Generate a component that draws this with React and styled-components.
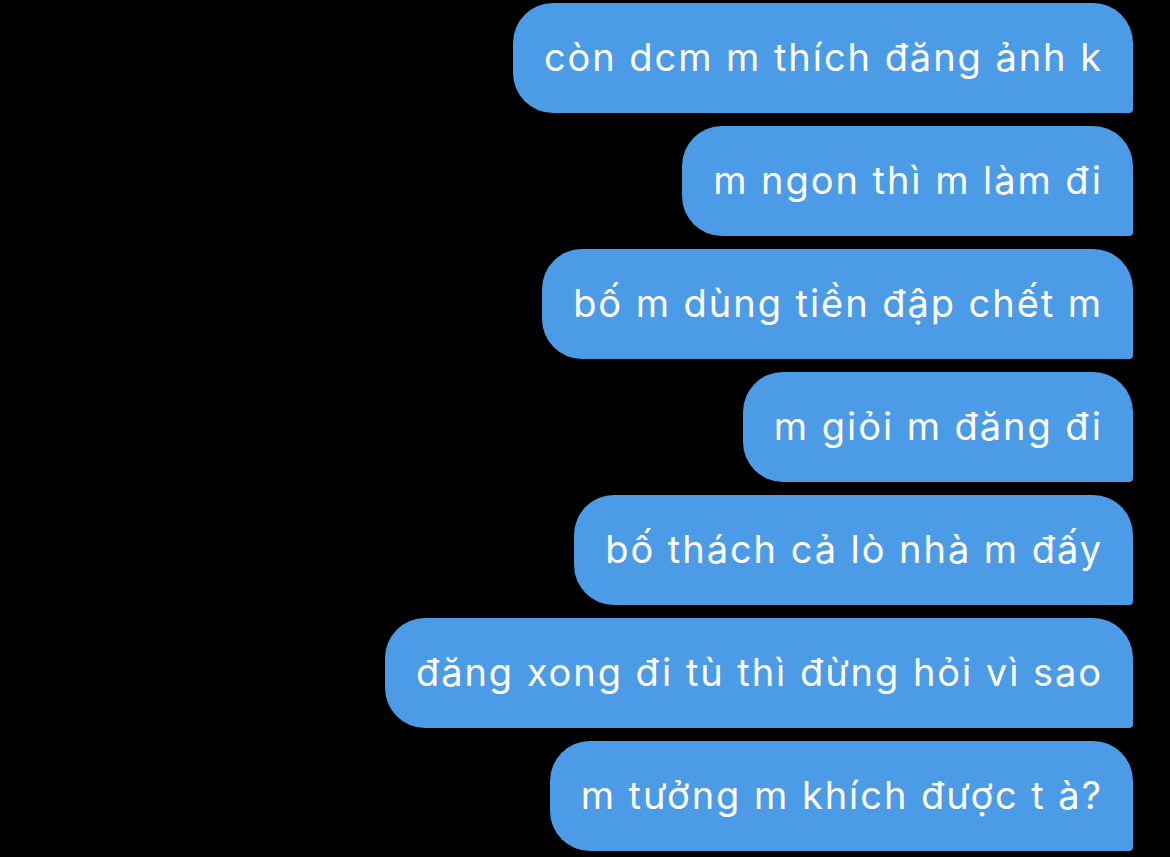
import React from 'react';
import styled, { createGlobalStyle } from 'styled-components';

const GlobalStyle = createGlobalStyle`
  html, body {
    margin: 0;
    padding: 0;
    background: #000000;
  }
  body {
    font-family: Inter, "Noto Sans", "Liberation Sans", sans-serif;
  }
`;

const Thread = styled.div`
  display: flex;
  flex-direction: column;
  align-items: flex-end;
  gap: 13px;
  padding: 3px 37px 0 0;
  min-height: 857px;
  box-sizing: border-box;
  background: #000000;
`;

const Bubble = styled.div`
  background: #4c9be7;
  color: #ffffff;
  height: 110px;
  box-sizing: border-box;
  display: flex;
  align-items: center;
  padding: 0 30px 2px 31px;
  font-size: 38px;
  letter-spacing: 1.95px;
  border-radius: 40px 40px 4px 40px;
  white-space: nowrap;
`;

const messages = [
  'còn dcm m thích đăng ảnh k',
  'm ngon thì m làm đi',
  'bố m dùng tiền đập chết m',
  'm giỏi m đăng đi',
  'bố thách cả lò nhà m đấy',
  'đăng xong đi tù thì đừng hỏi vì sao',
  'm tưởng m khích được t à?',
];

const App = () => (
  <>
    <GlobalStyle />
    <Thread>
      {messages.map((text, i) => (
        <Bubble key={i}>{text}</Bubble>
      ))}
    </Thread>
  </>
);

export default App;
